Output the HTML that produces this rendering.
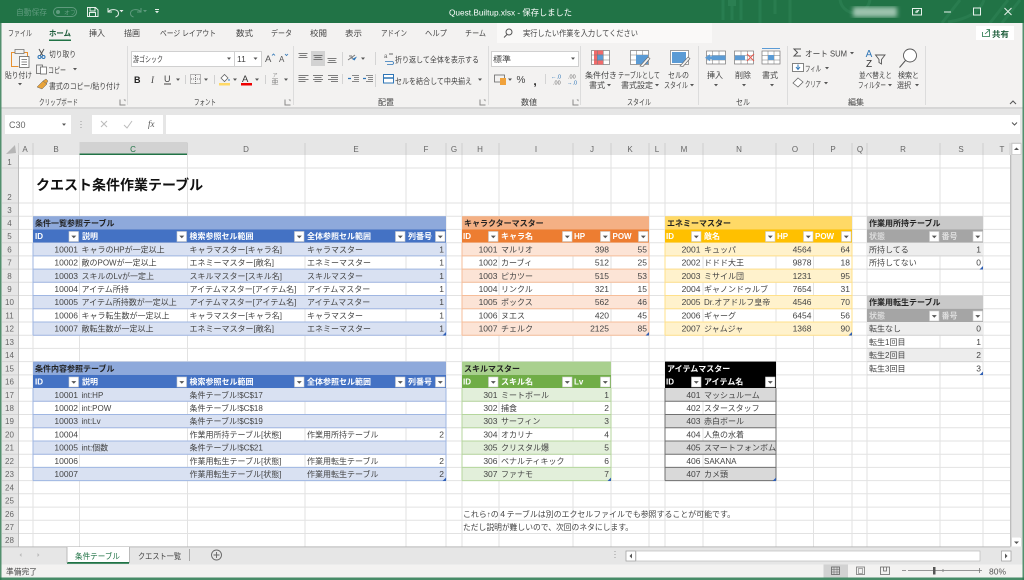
<!DOCTYPE html>
<html lang="ja"><head><meta charset="utf-8"><title>Quest.Builtup.xlsx</title>
<style>
html,body{margin:0;padding:0;background:#e6e6e6;width:1024px;height:580px;overflow:hidden}
svg{display:block;filter:blur(.3px)}
text{font-family:"Liberation Sans","Noto Sans CJK JP",sans-serif;font-size:8px;fill:#444}
.r{text-anchor:end}.m{text-anchor:middle}
.n{font-size:8.5px}
.b{font-weight:700;fill:#222}
.h{font-weight:700;fill:#fff}
.hg{font-weight:700;fill:#ddd}
.g{fill:#666;text-anchor:middle}
.w{fill:#fff}
.a{fill:#555}
.f{font-size:9px}
</style></head><body>
<svg width="1024" height="580" viewBox="0 0 1024 580" xmlns="http://www.w3.org/2000/svg">
<defs>
<g id="f"><rect x=".5" y=".5" width="9.5" height="10" fill="#fff" stroke="#ccc" stroke-width=".6"/><path d="M2.8 4.6h5l-2.5 2.6z" fill="#555"/></g>
<path id="d" d="M-2 -1h4l-2 2.4z" fill="#555"/>
<path id="l" d="M-3 3V-3h1V2h5v1zM1-3h2v2z" fill="#888"/>
<filter id="bl"><feGaussianBlur stdDeviation="2.2"/></filter>
</defs>
<rect width="1024" height="580" fill="#e6e6e6"/>

<!-- title bar -->
<rect width="1024" height="23" fill="#217346"/>
<g fill="none" stroke="#2b7f52" stroke-width="3" opacity=".8"><path d="M723 0V20M732 0V20M741 0V20M760 0V23M775 0V14M790 0V23M1020 0l-18 23M1008 0l-18 23M960 0l-18 23"/><circle cx="855" cy="-2" r="15"/><path d="M948 22c20-3 32-10 36-22"/></g>
<rect x="728" y="-4" width="8" height="10" fill="#2b7f52"/>
<text x="16" y="15" fill="#5f9b7e" style="fill:#5f9b7e" textLength="31" lengthAdjust="spacingAndGlyphs">自動保存</text>
<rect x="53.5" y="7.5" width="23" height="9" rx="4.5" fill="none" stroke="#5f9b7e"/><circle cx="58" cy="12" r="2" fill="#5f9b7e"/><text x="64" y="15" style="fill:#5f9b7e;font-size:6px">オフ</text>
<g fill="none" stroke="#e6f0ea" stroke-width="1"><path d="M87.5 7.5h8l2.500 2.500v6.500h-10.500zM90 7.500v3.500h5v-3.500M89.500 16.500v-4h6v4"/><path d="M108 8v4h4M108.500 11.500c3-3 10-2.500 10 2 0 2-1.500 3-3 3.500"/></g>
<use href="#d" x="121.500" y="11" style="fill:#fff"/><path d="M119.500 10h4l-2 2.300z" fill="#e6f0ea"/>
<path d="M141 8v4h-4M140.500 11.500c-3-3-10-2.500-10 2 0 2 1.500 3 3 3.500" fill="none" stroke="#5f9b7e"/>
<path d="M143 10h4l-2 2.300z" fill="#5f9b7e"/>
<path d="M155 9h4v1h-4zM155 11h4l-2 2.300z" fill="#e6f0ea"/>
<text x="449" y="15.500" class="w" style="fill:#fff;font-size:8.500px" textLength="123" lengthAdjust="spacingAndGlyphs">Quest.Builtup.xlsx  -  保存しました</text>
<rect x="853" y="7" width="44" height="10" fill="#9cc3ae" filter="url(#bl)"/>
<g fill="none" stroke="#e8f2ec"><rect x="912.500" y="8.500" width="9" height="6.500"/><path d="M919 10l-2 2h-2M917 10v3" /><path d="M944 12h7"/><rect x="973.500" y="8" width="7" height="7"/><path d="M1004.500 8l7 7M1011.500 8l-7 7"/></g>

<!-- tabs -->
<rect x="1.500" y="23" width="1021" height="20" fill="#f3f2f1"/>
<g>
<text x="8" y="36" textLength="24" lengthAdjust="spacingAndGlyphs">ファイル</text>
<text x="49" y="36" class="b" style="fill:#1d5c3a" textLength="22" lengthAdjust="spacingAndGlyphs">ホーム</text>
<rect x="49" y="39.500" width="22" height="1.500" fill="#217346"/>
<text x="89" y="36" textLength="16" lengthAdjust="spacingAndGlyphs">挿入</text>
<text x="124" y="36" textLength="16" lengthAdjust="spacingAndGlyphs">描画</text>
<text x="160" y="36" textLength="56" lengthAdjust="spacingAndGlyphs">ページ レイアウト</text>
<text x="236" y="36" textLength="17" lengthAdjust="spacingAndGlyphs">数式</text>
<text x="271" y="36" textLength="21" lengthAdjust="spacingAndGlyphs">データ</text>
<text x="310" y="36" textLength="17" lengthAdjust="spacingAndGlyphs">校閲</text>
<text x="345" y="36" textLength="17" lengthAdjust="spacingAndGlyphs">表示</text>
<text x="381" y="36" textLength="26" lengthAdjust="spacingAndGlyphs">アドイン</text>
<text x="425" y="36" textLength="22" lengthAdjust="spacingAndGlyphs">ヘルプ</text>
<text x="465" y="36" textLength="21" lengthAdjust="spacingAndGlyphs">チーム</text>
</g>
<rect x="497" y="23" width="215" height="20" fill="#faf9f8"/>
<circle cx="509" cy="32" r="3" fill="none" stroke="#555"/><path d="M507 34.500l-3 3" stroke="#555"/>
<text x="523" y="36" textLength="115" lengthAdjust="spacingAndGlyphs">実行したい作業を入力してください</text>
<rect x="976" y="26" width="38" height="14" fill="#fff"/>
<path d="M982.500 32v4.500h7V32M985 34l4.500-4M986.500 29.500h3v3" fill="none" stroke="#217346" stroke-width=".8"/>
<text x="992" y="37" class="b" style="fill:#1d5c3a" textLength="17" lengthAdjust="spacingAndGlyphs">共有</text>

<!-- ribbon -->
<rect x="1.500" y="43" width="1021" height="64" fill="#f3f2f1"/>
<rect x="1.500" y="107" width="1021" height="2" fill="#d6d6d6"/>
<path d="M127.500 46V105M293.500 46V105M488.500 46V105M580.500 46V105M698.500 46V105M787.500 46V105M925.500 46V105" stroke="#dcdcdc"/>
<text x="39" y="105" textLength="39" lengthAdjust="spacingAndGlyphs">クリップボード</text>
<text x="194" y="105" textLength="22" lengthAdjust="spacingAndGlyphs">フォント</text>
<text x="378" y="105" textLength="16" lengthAdjust="spacingAndGlyphs">配置</text>
<text x="521" y="105" textLength="16" lengthAdjust="spacingAndGlyphs">数値</text>
<text x="627" y="105" textLength="24" lengthAdjust="spacingAndGlyphs">スタイル</text>
<text x="736" y="105" textLength="14" lengthAdjust="spacingAndGlyphs">セル</text>
<text x="848" y="105" textLength="16" lengthAdjust="spacingAndGlyphs">編集</text>
<use href="#l" x="122.500" y="102.500"/><use href="#l" x="287.500" y="102.500"/><use href="#l" x="482.500" y="102.500"/><use href="#l" x="575.500" y="102.500"/>
<path d="M1010 104l3-3 3 3" fill="none" stroke="#555"/>

<!-- clipboard -->
<path d="M15 52.500h-3.500v14h7M24 52.500h3.500v4" fill="none" stroke="#e8902e"/><rect x="15" y="49.500" width="9" height="4" fill="#f3f2f1" stroke="#777" stroke-width=".8"/>
<rect x="19.500" y="56.500" width="9.500" height="11" fill="#fff" stroke="#666" stroke-width=".8"/><path d="M21.500 59.500h5.500M21.500 62h5.500M21.500 64.500h5.500" stroke="#666" stroke-width=".7"/>
<text x="5" y="78" textLength="27" lengthAdjust="spacingAndGlyphs">貼り付け</text><use href="#d" x="20" y="84"/>
<path d="M39 49l4 7M44 49l-4 7" stroke="#555" fill="none"/><circle cx="39.500" cy="57" r="1.500" fill="none" stroke="#2e75b6"/><circle cx="43.500" cy="57" r="1.500" fill="none" stroke="#2e75b6"/>
<text x="49" y="57" textLength="27" lengthAdjust="spacingAndGlyphs">切り取り</text>
<rect x="36.500" y="65" width="6" height="8.500" fill="#f3f2f1" stroke="#666" stroke-width=".8"/><rect x="40.500" y="67" width="6" height="7" fill="#fff" stroke="#666" stroke-width=".8"/>
<text x="48" y="73" textLength="18" lengthAdjust="spacingAndGlyphs">コピー</text><use href="#d" x="75" y="69"/>
<path d="M37 87l6-6 4 3-5 5zM43 81l3-2 2 2-2 3" fill="#e8a33a" stroke="#666" stroke-width=".5"/>
<text x="49" y="89" textLength="71" lengthAdjust="spacingAndGlyphs">書式のコピー/貼り付け</text>

<!-- font -->
<rect x="131.500" y="51.500" width="130" height="15" fill="#fff" stroke="#d0d0d0"/><path d="M234.500 51.500v15" stroke="#d0d0d0"/>
<text x="133" y="62" textLength="30" lengthAdjust="spacingAndGlyphs">游ゴシック</text><use href="#d" x="229" y="58.500"/>
<text x="237" y="62" class="n">11</text><use href="#d" x="255.500" y="58.500"/>
<text x="265" y="62" class="a" style="font-size:9.500px">A</text><path d="M272 55.500l1.500-1.500 1.500 1.500" stroke="#2e75b6" fill="none" stroke-width=".8"/>
<text x="279" y="62" class="a" style="font-size:8px">A</text><path d="M285 54l1.500 1.500 1.500-1.500" stroke="#2e75b6" fill="none" stroke-width=".8"/>
<text x="134" y="83" class="b" style="font-size:9px">B</text>
<text x="151" y="83" style="font-size:9px;font-style:italic;font-family:'Liberation Serif',serif">I</text>
<text x="164" y="82" style="font-size:9px">U</text><path d="M164 84h7" stroke="#444"/><use href="#d" x="178" y="79.500"/>
<path d="M185.500 75v9" stroke="#d0d0d0"/>
<rect x="190.500" y="74.500" width="10" height="9" fill="none" stroke="#777" stroke-dasharray="1 1"/><path d="M195.500 75v9M191 79h9" stroke="#777" stroke-dasharray="1 1"/><use href="#d" x="206" y="79.500"/>
<path d="M214.500 75v9" stroke="#d0d0d0"/>
<path d="M221 78l3.500-3.500 3.500 3.500-3.500 3.500z" fill="#fff" stroke="#666" stroke-width=".8"/><path d="M229 79v2" stroke="#2e75b6"/>
<rect x="219" y="83" width="11" height="2.500" fill="#ffd966"/><use href="#d" x="235" y="79.500"/>
<text x="242" y="82" style="font-size:9.500px;fill:#333">A</text><rect x="241" y="83" width="11" height="2.500" fill="#e00"/><use href="#d" x="257" y="79.500"/>
<path d="M265.500 75v9" stroke="#d0d0d0"/>
<text x="275" y="77" class="m" style="font-size:5px;fill:#888">ア</text><text x="275" y="84" class="m" style="font-size:7px;fill:#888">亜</text><use href="#d" x="286" y="79.500"/>

<!-- alignment -->
<rect x="311" y="51" width="14" height="15" fill="#d2d2d2"/>
<path d="M298.500 53.500h9M299.500 55.500h7M298.500 57.500h9M313.500 55.500h9M314.500 57.500h7M313.500 59.500h9M327.500 58.500h9M328.500 60.500h7M327.500 62.500h9" stroke="#555" stroke-width=".8"/>
<path d="M298.500 75.500h10M298.500 77.500h7M298.500 79.500h10M298.500 81.500h7M313 75.500h10M314.500 77.500h7M313 79.500h10M314.500 81.500h7M328 75.500h10M331 77.500h7M328 79.500h10M331 81.500h7" stroke="#555" stroke-width=".8"/>
<path d="M342.500 52v14M342.500 74v10M375.500 52v13M375.500 74v13" stroke="#d4d4d4"/>
<path d="M348 60l7-5M349 56h3M350 58h3" stroke="#777" fill="none"/><path d="M352 59l5-2.500-2.500 4z" fill="#2e75b6"/><use href="#d" x="363" y="58.500"/>
<path d="M352 75.500h7M354 77.500h5M354 79.500h5M352 81.500h7M366 75.500h7M368 77.500h5M368 79.500h5M366 81.500h7" stroke="#666" stroke-width=".8"/>
<path d="M348 78.500h3M363 78.500h3" stroke="#2e75b6" stroke-width="1.300"/>
<text x="384" y="58" style="font-size:6px;fill:#666">a</text><path d="M385 61.500h7c2 0 2 3 0 3h-5" stroke="#2e75b6" fill="none" stroke-width=".8"/><path d="M389 54h4" stroke="#666"/>
<text x="395" y="62.500" textLength="84" lengthAdjust="spacingAndGlyphs">折り返して全体を表示する</text>
<rect x="383.500" y="74.500" width="10" height="8.500" fill="#fff" stroke="#2e75b6"/><path d="M384 78h9" stroke="#2e75b6" stroke-width="1.500"/>
<text x="395" y="84" textLength="77" lengthAdjust="spacingAndGlyphs">セルを結合して中央揃え</text><use href="#d" x="480" y="79.500"/>

<!-- number -->
<rect x="491.500" y="51.500" width="87" height="15" fill="#fff" stroke="#d0d0d0"/>
<text x="493" y="62" textLength="18" lengthAdjust="spacingAndGlyphs">標準</text><use href="#d" x="573" y="58.500"/>
<rect x="494.500" y="75" width="10" height="7" fill="#f3f2f1" stroke="#666" stroke-width=".8"/><rect x="500" y="78" width="6" height="7" fill="#f0a23c"/><use href="#d" x="510" y="79.500"/>
<text x="521" y="83" class="m f" style="font-size:10px">%</text><text x="535" y="85" class="m b" style="font-size:12px">,</text>
<path d="M545.500 74v10" stroke="#d4d4d4"/>
<text x="551" y="78.500" style="font-size:5.500px;fill:#2e75b6">←.0</text><text x="553" y="84.500" style="font-size:5.500px;fill:#666">.00</text>
<text x="568" y="78.500" style="font-size:5.500px;fill:#666">.00</text><text x="567" y="84.500" style="font-size:5.500px;fill:#2e75b6">→.0</text>

<!-- style -->
<g fill="#fff" stroke="#777" stroke-width=".7">
<rect x="591.500" y="50.500" width="18" height="14"/><rect x="630.500" y="50.500" width="18" height="14"/><rect x="670.500" y="50.500" width="18" height="14"/></g>
<path d="M594 50.500h9v4h-6v6h6v4h-9z" fill="#f06a6a"/><rect x="597" y="54.500" width="6" height="6" fill="#5b9bd5"/>
<path d="M597.500 50.500v14M603.500 50.500v14M591.500 55h18M591.500 60h18M636.500 50.500v14M642.500 50.500v14M630.500 55h18M630.500 60h18" stroke="#777" stroke-width=".5"/>
<rect x="636" y="55" width="12" height="9" fill="#5b9bd5"/><path d="M640 66l8-9 2 1.500-7 8z" fill="#f3f2f1" stroke="#666" stroke-width=".6"/>
<rect x="672" y="52" width="14" height="11" fill="#5b9bd5"/><path d="M680 66l8-9 2 1.500-7 8z" fill="#f3f2f1" stroke="#666" stroke-width=".6"/>
<text x="585" y="78" textLength="32" lengthAdjust="spacingAndGlyphs">条件付き</text>
<text x="589" y="88" textLength="16" lengthAdjust="spacingAndGlyphs">書式</text><use href="#d" x="609" y="85"/>
<text x="618" y="78" textLength="42" lengthAdjust="spacingAndGlyphs">テーブルとして</text>
<text x="621" y="88" textLength="32" lengthAdjust="spacingAndGlyphs">書式設定</text><use href="#d" x="657" y="85"/>
<text x="668" y="78" textLength="21" lengthAdjust="spacingAndGlyphs">セルの</text>
<text x="664" y="88" textLength="24" lengthAdjust="spacingAndGlyphs">スタイル</text><use href="#d" x="692" y="85"/>

<!-- cells -->
<g fill="#fff" stroke="#777" stroke-width=".7"><rect x="706.500" y="51" width="19" height="13"/><rect x="734.500" y="51" width="19" height="13"/><rect x="762" y="51" width="18" height="13"/></g>
<path d="M712.500 51v13M719 51v13M706.500 55.500h19M706.500 60h19M741 51v13M747.500 51v13M734.500 55.500h19M734.500 60h19M768 51v13M774 51v13M762 55.500h18M762 60h18" stroke="#777" stroke-width=".5"/>
<rect x="712" y="55.500" width="13.500" height="4.500" fill="#5b9bd5"/><path d="M705 57.700l5-3.500v2h4v3h-4v2z" fill="#5b9bd5"/>
<rect x="735" y="55.500" width="10" height="4.500" fill="#5b9bd5"/><path d="M747 54l7 7M754 54l-7 7" stroke="#e85a4f"/>
<rect x="768" y="55" width="6" height="5" fill="#5b9bd5"/><path d="M762 48.500h18" stroke="#5b9bd5"/>
<text x="707" y="78" textLength="16" lengthAdjust="spacingAndGlyphs">挿入</text><use href="#d" x="716" y="85"/>
<text x="735" y="78" textLength="16" lengthAdjust="spacingAndGlyphs">削除</text><use href="#d" x="744" y="85"/>
<text x="762" y="78" textLength="16" lengthAdjust="spacingAndGlyphs">書式</text><use href="#d" x="772" y="85"/>

<!-- edit -->
<path d="M801 49h-7l3.500 3.500-3.500 3.500h7" fill="none" stroke="#555"/>
<text x="805" y="56.500" textLength="42" lengthAdjust="spacingAndGlyphs">オート SUM</text><use href="#d" x="852" y="53"/>
<rect x="792.500" y="63.500" width="11" height="8" fill="#fff" stroke="#666" stroke-width=".8"/><path d="M798 64.500v4M796 67l2 2.500 2-2.500" stroke="#2e75b6" fill="none"/>
<text x="805" y="71.500" textLength="16" lengthAdjust="spacingAndGlyphs">フィル</text><use href="#d" x="827" y="68"/>
<path d="M793 83l5-5 5 4-5 5z" fill="#fff" stroke="#666" stroke-width=".8"/>
<text x="805" y="87" textLength="16" lengthAdjust="spacingAndGlyphs">クリア</text><use href="#d" x="826" y="83"/>
<text x="869" y="57" class="m" style="font-size:10px;fill:#2e75b6">A</text><text x="869" y="67" class="m" style="font-size:10px;fill:#333">Z</text>
<path d="M875.500 55h9.500l-3.500 4.500v4.500l-2.500-1.500v-3z" fill="none" stroke="#555" stroke-width=".9"/>
<text x="859" y="78" textLength="33" lengthAdjust="spacingAndGlyphs">並べ替えと</text>
<text x="858" y="88" textLength="28" lengthAdjust="spacingAndGlyphs">フィルター</text><use href="#d" x="890" y="85"/>
<circle cx="910" cy="55.500" r="6.500" fill="#fff" stroke="#555" stroke-width=".9"/><path d="M905.500 60.500l-6 7" stroke="#555"/>
<text x="898" y="78" textLength="21" lengthAdjust="spacingAndGlyphs">検索と</text>
<text x="897" y="88" textLength="14" lengthAdjust="spacingAndGlyphs">選択</text><use href="#d" x="917" y="85"/>

<!-- formula bar -->
<rect x="5" y="115" width="66" height="19" fill="#fff"/><text x="9" y="128" class="n" style="font-size:9px;fill:#666">C30</text><use href="#d" x="64" y="124.500"/>
<path d="M81 121v1M81 124v1M81 127v1" stroke="#999"/>
<rect x="92" y="115" width="71" height="19" fill="#fff"/>
<path d="M101 121l6 6M107 121l-6 6" stroke="#bbb"/><path d="M124 125l3 3 5-7" stroke="#bbb" fill="none"/>
<text x="148" y="127" style="font-family:'Liberation Serif',serif;font-style:italic;font-size:9px;fill:#555">fx</text>
<rect x="166" y="115" width="854" height="19" fill="#fff"/><path d="M1012 122.500l2.500 2.500 2.500-2.500" fill="none" stroke="#555"/>

<!-- sheet base -->
<rect x="18" y="155" width="992" height="392" fill="#fff"/>
<rect x="1.500" y="142" width="1008.500" height="13" fill="#e6e6e6"/>
<rect x="79.500" y="142" width="108" height="13" fill="#d2d2d2"/><rect x="79.500" y="153.500" width="108" height="1.500" fill="#217346"/>
<path d="M16 153l-1-8-9 9z" fill="#b5b5b5"/>
<path d="M18.500 143V155M33 143V155M187.500 143V155M305 143V155M406 143V155M446 143V155M462 143V155M499 143V155M573 143V155M611 143V155M649 143V155M665 143V155M703 143V155M776 143V155M813.500 143V155M852 143V155M867 143V155M940 143V155M983 143V155M1010 143V155" stroke="#cfcfcf"/>
<path d="M18 168H1010M18 203H1010M18 216.200H1010M18 229.400H1010M18 242.700H1010M18 255.900H1010M18 269.100H1010M18 282.300H1010M18 295.500H1010M18 308.800H1010M18 322H1010M18 335.200H1010M18 348.400H1010M18 361.600H1010M18 374.900H1010M18 388.100H1010M18 401.300H1010M18 414.500H1010M18 427.700H1010M18 441H1010M18 454.200H1010M18 467.400H1010M18 480.600H1010M18 493.800H1010M18 507.100H1010M18 520.300H1010M18 533.500H1010" stroke="#e2e2e2"/>
<path d="M33 155V547M79.500 155V547M187.500 155V547M305 155V547M406 155V547M446 155V547M462 155V547M499 155V547M573 155V547M611 155V547M649 155V547M665 155V547M703 155V547M776 155V547M813.500 155V547M852 155V547M867 155V547M940 155V547M983 155V547" stroke="#e2e2e2"/>
<path d="M2 168H18M2 203H18M2 216.200H18M2 229.400H18M2 242.700H18M2 255.900H18M2 269.100H18M2 282.300H18M2 295.500H18M2 308.800H18M2 322H18M2 335.200H18M2 348.400H18M2 361.600H18M2 374.900H18M2 388.100H18M2 401.300H18M2 414.500H18M2 427.700H18M2 441H18M2 454.200H18M2 467.400H18M2 480.600H18M2 493.800H18M2 507.100H18M2 520.300H18M2 533.500H18" stroke="#d2d2d2"/>
<path d="M18.500 155V547" stroke="#bdbdbd"/>
<rect x="1010" y="155" width="1" height="392" fill="#bdbdbd"/>
<!-- col headers -->
<g class="hdr">
<text x="25" y="152" class="g">A</text><text x="56" y="152" class="g">B</text><text x="133" y="152" class="g" style="fill:#217346">C</text><text x="246" y="152" class="g">D</text><text x="356" y="152" class="g">E</text><text x="426" y="152" class="g">F</text><text x="454" y="152" class="g">G</text><text x="480" y="152" class="g">H</text><text x="536" y="152" class="g">I</text><text x="592" y="152" class="g">J</text><text x="630" y="152" class="g">K</text><text x="657" y="152" class="g">L</text><text x="684" y="152" class="g">M</text><text x="739" y="152" class="g">N</text><text x="795" y="152" class="g">O</text><text x="833" y="152" class="g">P</text><text x="860" y="152" class="g">Q</text><text x="903" y="152" class="g">R</text><text x="961" y="152" class="g">S</text><text x="1002" y="152" class="g">T</text>
</g>
<!-- row headers -->
<text x="9.500" y="165" class="g">1</text><text x="9.500" y="200" class="g">2</text><text x="9.500" y="213" class="g">3</text><text x="9.500" y="226" class="g">4</text><text x="9.500" y="239.200" class="g">5</text><text x="9.500" y="252.400" class="g">6</text><text x="9.500" y="265.600" class="g">7</text><text x="9.500" y="278.800" class="g">8</text><text x="9.500" y="292" class="g">9</text><text x="9.500" y="305.200" class="g">10</text><text x="9.500" y="318.500" class="g">11</text><text x="9.500" y="331.700" class="g">12</text><text x="9.500" y="345" class="g">13</text><text x="9.500" y="358.100" class="g">14</text><text x="9.500" y="371.300" class="g">15</text><text x="9.500" y="384.600" class="g">16</text><text x="9.500" y="397.800" class="g">17</text><text x="9.500" y="411" class="g">18</text><text x="9.500" y="424.200" class="g">19</text><text x="9.500" y="437.400" class="g">20</text><text x="9.500" y="450.700" class="g">21</text><text x="9.500" y="463.900" class="g">22</text><text x="9.500" y="477.100" class="g">23</text><text x="9.500" y="490.300" class="g">24</text><text x="9.500" y="503.500" class="g">25</text><text x="9.500" y="516.800" class="g">26</text><text x="9.500" y="530" class="g">27</text><text x="9.500" y="543.200" class="g">28</text>

<text x="36" y="190" style="font-size:14px;font-weight:700;fill:#111">クエスト条件作業テーブル</text>

<!-- table fills -->
<!-- T1 -->
<rect x="33" y="216.200" width="413" height="13.200" fill="#8ea9db"/><rect x="33" y="229.400" width="413" height="13.300" fill="#4472c4"/>
<g fill="#d9e1f2"><rect x="33" y="242.700" width="413" height="13.200"/><rect x="33" y="269.100" width="413" height="13.200"/><rect x="33" y="295.500" width="413" height="13.300"/><rect x="33" y="322" width="413" height="13.200"/></g>
<path d="M33 255.900H446M33 269.100H446M33 282.300H446M33 295.500H446M33 308.800H446M33 322H446M33 335.200H446M33 242.700V335.200M446 242.700V335.200" stroke="#9fb6e2" fill="none"/>
<!-- T2 -->
<rect x="33" y="361.600" width="413" height="13.300" fill="#8ea9db"/><rect x="33" y="374.900" width="413" height="13.200" fill="#4472c4"/>
<g fill="#d9e1f2"><rect x="33" y="388.100" width="413" height="13.200"/><rect x="33" y="414.500" width="413" height="13.200"/><rect x="33" y="441" width="413" height="13.200"/><rect x="33" y="467.400" width="413" height="13.200"/></g>
<path d="M33 401.300H446M33 414.500H446M33 427.700H446M33 441H446M33 454.200H446M33 467.400H446M33 480.600H446M33 388.100V480.600M446 388.100V480.600" stroke="#9fb6e2" fill="none"/>
<!-- Orange -->
<rect x="462" y="216.200" width="187" height="13.200" fill="#f4b084"/><rect x="462" y="229.400" width="187" height="13.300" fill="#ed7d31"/>
<g fill="#fce4d6"><rect x="462" y="242.700" width="187" height="13.200"/><rect x="462" y="269.100" width="187" height="13.200"/><rect x="462" y="295.500" width="187" height="13.300"/><rect x="462" y="322" width="187" height="13.200"/></g>
<path d="M462 255.900H649M462 269.100H649M462 282.300H649M462 295.500H649M462 308.800H649M462 322H649M462 335.200H649M462 242.700V335.200M649 242.700V335.200" stroke="#f6bd99" fill="none"/>
<!-- Yellow -->
<rect x="665" y="216.200" width="187" height="13.200" fill="#ffd966"/><rect x="665" y="229.400" width="187" height="13.300" fill="#ffc000"/>
<g fill="#fff2cc"><rect x="665" y="242.700" width="187" height="13.200"/><rect x="665" y="269.100" width="187" height="13.200"/><rect x="665" y="295.500" width="187" height="13.300"/><rect x="665" y="322" width="187" height="13.200"/></g>
<path d="M665 255.900H852M665 269.100H852M665 282.300H852M665 295.500H852M665 308.800H852M665 322H852M665 335.200H852M665 242.700V335.200M852 242.700V335.200" stroke="#ffe08a" fill="none"/>
<!-- Gray 1 -->
<rect x="867" y="216.200" width="116" height="13.200" fill="#c9c9c9"/><rect x="867" y="229.400" width="116" height="13.300" fill="#a5a5a5"/>
<rect x="867" y="242.700" width="116" height="13.200" fill="#ededed"/>
<path d="M867 255.900H983M867 269.100H983" stroke="#d4d4d4"/>
<!-- Gray 2 -->
<rect x="867" y="295.500" width="116" height="13.300" fill="#c9c9c9"/><rect x="867" y="308.800" width="116" height="13.200" fill="#a5a5a5"/>
<rect x="867" y="322" width="116" height="13.200" fill="#ededed"/><rect x="867" y="348.400" width="116" height="13.200" fill="#ededed"/>
<path d="M867 335.200H983M867 348.400H983M867 361.600H983M867 374.900H983" stroke="#d4d4d4"/>
<!-- Green -->
<rect x="462" y="361.600" width="149" height="13.300" fill="#a9d08e"/><rect x="462" y="374.900" width="149" height="13.200" fill="#70ad47"/>
<g fill="#e2efda"><rect x="462" y="388.100" width="149" height="13.200"/><rect x="462" y="414.500" width="149" height="13.200"/><rect x="462" y="441" width="149" height="13.200"/><rect x="462" y="467.400" width="149" height="13.200"/></g>
<path d="M462 401.300H611M462 414.500H611M462 427.700H611M462 441H611M462 454.200H611M462 467.400H611M462 480.600H611M462 388.100V480.600M611 388.100V480.600" stroke="#b5d69d" fill="none"/>
<!-- Black -->
<rect x="665" y="361.600" width="111" height="26.500" fill="#000"/>
<g fill="#d9d9d9"><rect x="665" y="388.100" width="111" height="13.200"/><rect x="665" y="414.500" width="111" height="13.200"/><rect x="665" y="441" width="111" height="13.200"/><rect x="665" y="467.400" width="111" height="13.200"/></g>
<path d="M665 401.300H776M665 414.500H776M665 427.700H776M665 441H776M665 454.200H776M665 467.400H776M665 480.600H776M665 388.100V480.600M776 388.100V480.600" stroke="#707070" fill="none"/>

<!-- filter buttons -->
<use href="#f" x="68.500" y="231"/><use href="#f" x="176.500" y="231"/><use href="#f" x="294" y="231"/><use href="#f" x="395" y="231"/><use href="#f" x="435" y="231"/>
<use href="#f" x="68.500" y="376.500"/><use href="#f" x="176.500" y="376.500"/><use href="#f" x="294" y="376.500"/><use href="#f" x="395" y="376.500"/><use href="#f" x="435" y="376.500"/>
<use href="#f" x="488" y="231"/><use href="#f" x="562" y="231"/><use href="#f" x="600" y="231"/><use href="#f" x="638" y="231"/>
<use href="#f" x="691" y="231"/><use href="#f" x="765" y="231"/><use href="#f" x="803" y="231"/><use href="#f" x="841" y="231"/>
<use href="#f" x="929" y="231"/><use href="#f" x="972.500" y="231"/><use href="#f" x="929" y="310.500"/><use href="#f" x="972.500" y="310.500"/>
<use href="#f" x="488" y="376.500"/><use href="#f" x="562" y="376.500"/><use href="#f" x="600" y="376.500"/>
<use href="#f" x="691" y="376.500"/><use href="#f" x="765" y="376.500"/>
<!-- resize handles -->
<g fill="#2f5fb5"><path d="M446 332v3.500h-3.500zM446 477.500v3.500h-3.500zM649 332v3.500h-3.500zM852 332v3.500h-3.500zM983 266v3.500h-3.500zM983 371.500v3.500h-3.500zM611 477.500v3.500h-3.500zM776 477.500v3.500h-3.500z"/></g>

<!-- T1 text -->
<text x="35" y="226" class="b">条件一覧参照テーブル</text>
<text x="35" y="239.200" class="h">ID</text><text x="82" y="239.200" class="h">説明</text><text x="189.500" y="239.200" class="h">検索参照セル範囲</text><text x="307" y="239.200" class="h">全体参照セル範囲</text><text x="408" y="239.200" class="h">列番号</text>
<text x="78" y="252.400" class="r n">10001</text><text x="81.500" y="252.400">キャラのHPが一定以上</text><text x="189.500" y="252.400">キャラマスター[キャラ名]</text><text x="307" y="252.400">キャラマスター</text><text x="444" y="252.400" class="r n">1</text>
<text x="78" y="265.600" class="r n">10002</text><text x="81.500" y="265.600">敵のPOWが一定以上</text><text x="189.500" y="265.600">エネミーマスター[敵名]</text><text x="307" y="265.600">エネミーマスター</text><text x="444" y="265.600" class="r n">1</text>
<text x="78" y="278.800" class="r n">10003</text><text x="81.500" y="278.800">スキルのLvが一定上</text><text x="189.500" y="278.800">スキルマスター[スキル名]</text><text x="307" y="278.800">スキルマスター</text><text x="444" y="278.800" class="r n">1</text>
<text x="78" y="292" class="r n">10004</text><text x="81.500" y="292">アイテム所持</text><text x="189.500" y="292">アイテムマスター[アイテム名]</text><text x="307" y="292">アイテムマスター</text><text x="444" y="292" class="r n">1</text>
<text x="78" y="305.200" class="r n">10005</text><text x="81.500" y="305.200">アイテム所持数が一定以上</text><text x="189.500" y="305.200">アイテムマスター[アイテム名]</text><text x="307" y="305.200">アイテムマスター</text><text x="444" y="305.200" class="r n">1</text>
<text x="78" y="318.500" class="r n">10006</text><text x="81.500" y="318.500">キャラ転生数が一定以上</text><text x="189.500" y="318.500">キャラマスター[キャラ名]</text><text x="307" y="318.500">キャラマスター</text><text x="444" y="318.500" class="r n">1</text>
<text x="78" y="331.700" class="r n">10007</text><text x="81.500" y="331.700">敵転生数が一定以上</text><text x="189.500" y="331.700">エネミーマスター[敵名]</text><text x="307" y="331.700">エネミーマスター</text><text x="444" y="331.700" class="r n">1</text>

<!-- T2 text -->
<text x="35" y="371.300" class="b">条件内容参照テーブル</text>
<text x="35" y="384.600" class="h">ID</text><text x="82" y="384.600" class="h">説明</text><text x="189.500" y="384.600" class="h">検索参照セル範囲</text><text x="307" y="384.600" class="h">全体参照セル範囲</text><text x="408" y="384.600" class="h">列番号</text>
<text x="78" y="397.800" class="r n">10001</text><text x="81.500" y="397.800">int:HP</text><text x="189.500" y="397.800">条件テーブル!$C$17</text>
<text x="78" y="411" class="r n">10002</text><text x="81.500" y="411">int:POW</text><text x="189.500" y="411">条件テーブル!$C$18</text>
<text x="78" y="424.200" class="r n">10003</text><text x="81.500" y="424.200">int:Lv</text><text x="189.500" y="424.200">条件テーブル!$C$19</text>
<text x="78" y="437.400" class="r n">10004</text><text x="189.500" y="437.400">作業用所持テーブル[状態]</text><text x="307" y="437.400">作業用所持テーブル</text><text x="444" y="437.400" class="r n">2</text>
<text x="78" y="450.700" class="r n">10005</text><text x="81.500" y="450.700">int:個数</text><text x="189.500" y="450.700">条件テーブル!$C$21</text>
<text x="78" y="463.900" class="r n">10006</text><text x="189.500" y="463.900">作業用転生テーブル[状態]</text><text x="307" y="463.900">作業用転生テーブル</text><text x="444" y="463.900" class="r n">2</text>
<text x="78" y="477.100" class="r n">10007</text><text x="189.500" y="477.100">作業用転生テーブル[状態]</text><text x="307" y="477.100">作業用転生テーブル</text><text x="444" y="477.100" class="r n">2</text>

<!-- Orange text -->
<text x="464" y="226" class="b">キャラクターマスター</text>
<text x="463" y="239.200" class="h">ID</text><text x="501" y="239.200" class="h">キャラ名</text><text x="574" y="239.200" class="h">HP</text><text x="612.500" y="239.200" class="h">POW</text>
<text x="497.500" y="252.400" class="r n">1001</text><text x="501" y="252.400">マルリオ</text><text x="609" y="252.400" class="r n">398</text><text x="647" y="252.400" class="r n">55</text>
<text x="497.500" y="265.600" class="r n">1002</text><text x="501" y="265.600">カーブィ</text><text x="609" y="265.600" class="r n">512</text><text x="647" y="265.600" class="r n">25</text>
<text x="497.500" y="278.800" class="r n">1003</text><text x="501" y="278.800">ピカツー</text><text x="609" y="278.800" class="r n">515</text><text x="647" y="278.800" class="r n">53</text>
<text x="497.500" y="292" class="r n">1004</text><text x="501" y="292">リンクル</text><text x="609" y="292" class="r n">321</text><text x="647" y="292" class="r n">15</text>
<text x="497.500" y="305.200" class="r n">1005</text><text x="501" y="305.200">ポックス</text><text x="609" y="305.200" class="r n">562</text><text x="647" y="305.200" class="r n">46</text>
<text x="497.500" y="318.500" class="r n">1006</text><text x="501" y="318.500">ヌエス</text><text x="609" y="318.500" class="r n">420</text><text x="647" y="318.500" class="r n">45</text>
<text x="497.500" y="331.700" class="r n">1007</text><text x="501" y="331.700">チェルク</text><text x="609" y="331.700" class="r n">2125</text><text x="647" y="331.700" class="r n">85</text>

<!-- Yellow text -->
<text x="667" y="226" class="b">エネミーマスター</text>
<text x="666" y="239.200" class="h">ID</text><text x="704" y="239.200" class="h">敵名</text><text x="777" y="239.200" class="h">HP</text><text x="815" y="239.200" class="h">POW</text>
<text x="700.500" y="252.400" class="r n">2001</text><text x="704" y="252.400">キュッパ</text><text x="811.500" y="252.400" class="r n">4564</text><text x="850" y="252.400" class="r n">64</text>
<text x="700.500" y="265.600" class="r n">2002</text><text x="704" y="265.600">ドドド大王</text><text x="811.500" y="265.600" class="r n">9878</text><text x="850" y="265.600" class="r n">18</text>
<text x="700.500" y="278.800" class="r n">2003</text><text x="704" y="278.800">ミサイル団</text><text x="811.500" y="278.800" class="r n">1231</text><text x="850" y="278.800" class="r n">95</text>
<text x="700.500" y="292" class="r n">2004</text><text x="704" y="292">ギャノンドゥルブ</text><text x="811.500" y="292" class="r n">7654</text><text x="850" y="292" class="r n">31</text>
<text x="700.500" y="305.200" class="r n">2005</text><text x="704" y="305.200">Dr.オアドルフ皇帝</text><text x="811.500" y="305.200" class="r n">4546</text><text x="850" y="305.200" class="r n">70</text>
<text x="700.500" y="318.500" class="r n">2006</text><text x="704" y="318.500">ギャーグ</text><text x="811.500" y="318.500" class="r n">6454</text><text x="850" y="318.500" class="r n">56</text>
<text x="700.500" y="331.700" class="r n">2007</text><text x="704" y="331.700">ジャムジャ</text><text x="811.500" y="331.700" class="r n">1368</text><text x="850" y="331.700" class="r n">90</text>

<!-- Gray text -->
<text x="869" y="226" class="b">作業用所持テーブル</text>
<text x="869" y="239.200" class="hg">状態</text><text x="941.500" y="239.200" class="hg">番号</text>
<text x="869" y="252.400">所持してる</text><text x="981" y="252.400" class="r n">1</text>
<text x="869" y="265.600">所持してない</text><text x="981" y="265.600" class="r n">0</text>
<text x="869" y="305.200" class="b">作業用転生テーブル</text>
<text x="869" y="318.500" class="hg">状態</text><text x="941.500" y="318.500" class="hg">番号</text>
<text x="869" y="331.700">転生なし</text><text x="981" y="331.700" class="r n">0</text>
<text x="869" y="345">転生1回目</text><text x="981" y="345" class="r n">1</text>
<text x="869" y="358.100">転生2回目</text><text x="981" y="358.100" class="r n">2</text>
<text x="869" y="371.300">転生3回目</text><text x="981" y="371.300" class="r n">3</text>

<!-- Green text -->
<text x="464" y="371.300" class="b">スキルマスター</text>
<text x="463" y="384.600" class="h">ID</text><text x="501" y="384.600" class="h">スキル名</text><text x="574" y="384.600" class="h">Lv</text>
<text x="497.500" y="397.800" class="r n">301</text><text x="501" y="397.800">ミートボール</text><text x="609" y="397.800" class="r n">1</text>
<text x="497.500" y="411" class="r n">302</text><text x="501" y="411">捕食</text><text x="609" y="411" class="r n">2</text>
<text x="497.500" y="424.200" class="r n">303</text><text x="501" y="424.200">サーフィン</text><text x="609" y="424.200" class="r n">3</text>
<text x="497.500" y="437.400" class="r n">304</text><text x="501" y="437.400">オカリナ</text><text x="609" y="437.400" class="r n">4</text>
<text x="497.500" y="450.700" class="r n">305</text><text x="501" y="450.700">クリスタル爆</text><text x="609" y="450.700" class="r n">5</text>
<text x="497.500" y="463.900" class="r n">306</text><text x="501" y="463.900">ペナルティキック</text><text x="609" y="463.900" class="r n">6</text>
<text x="497.500" y="477.100" class="r n">307</text><text x="501" y="477.100">ファナモ</text><text x="609" y="477.100" class="r n">7</text>

<!-- Black text -->
<text x="667" y="371.300" class="h">アイテムマスター</text>
<text x="666" y="384.600" class="h">ID</text><text x="704" y="384.600" class="h">アイテム名</text>
<text x="700.500" y="397.800" class="r n">401</text><text x="704" y="397.800">マッシュルーム</text>
<text x="700.500" y="411" class="r n">402</text><text x="704" y="411">スタースタッフ</text>
<text x="700.500" y="424.200" class="r n">403</text><text x="704" y="424.200">赤白ボール</text>
<text x="700.500" y="437.400" class="r n">404</text><text x="704" y="437.400">人魚の水着</text>
<text x="700.500" y="450.700" class="r n">405</text><text x="704" y="450.700" textLength="72" lengthAdjust="spacingAndGlyphs">スマートフォンボム</text>
<text x="700.500" y="463.900" class="r n">406</text><text x="704" y="463.900">SAKANA</text>
<text x="700.500" y="477.100" class="r n">407</text><text x="704" y="477.100">カメ頭</text>

<text x="463" y="516.800" textLength="272" lengthAdjust="spacingAndGlyphs">これら↑の４テーブルは別のエクセルファイルでも参照することが可能です。</text>
<text x="463" y="530" textLength="170" lengthAdjust="spacingAndGlyphs">ただし説明が難しいので、次回のネタにします。</text>

<!-- vertical scrollbar -->
<rect x="1011.500" y="143" width="9.500" height="404" fill="#f0f0f0" stroke="#c8c8c8" stroke-width=".6"/>
<rect x="1012" y="143.500" width="9" height="11" fill="#fff" stroke="#bbb" stroke-width=".6"/><path d="M1014 150l2.500-2.500 2.500 2.500z" fill="#555"/>
<rect x="1012" y="155" width="9" height="382" fill="#e3e3e3"/>
<rect x="1012" y="538" width="9" height="9" fill="#fff"/><path d="M1014 541.500l2.500 2.500 2.500-2.500z" fill="#555"/>

<!-- sheet tabs -->
<rect x="1.500" y="546.500" width="1021" height="18" fill="#e6e6e6"/>
<rect x="1.500" y="546.500" width="1009" height=".8" fill="#aaa"/>
<rect x="67" y="547" width="62" height="17" fill="#fff"/><rect x="67" y="562" width="62" height="1.800" fill="#217346"/>
<path d="M67 547v16M129.500 547v16" stroke="#bbb"/>
<text x="75" y="559" style="fill:#217346" textLength="45" lengthAdjust="spacingAndGlyphs">条件テーブル</text>
<text x="138" y="559" textLength="43" lengthAdjust="spacingAndGlyphs">クエスト一覧</text>
<path d="M189.500 549v12" stroke="#a8a8a8"/>
<circle cx="216.500" cy="555" r="5" fill="none" stroke="#666" stroke-width=".9"/><path d="M213.500 555h6M216.500 552v6" stroke="#666" stroke-width=".9"/>
<path d="M21.500 553l-2 2 2 2zM37.500 553l2 2-2 2z" fill="#bbb"/>
<path d="M615 551v1M615 554v1M615 557v1" stroke="#999"/>
<rect x="626" y="551" width="9.500" height="10" fill="#fff" stroke="#999" stroke-width=".7"/><path d="M632 553.500l-2.500 2.500 2.500 2.500z" fill="#555"/>
<rect x="636" y="551" width="344" height="10" fill="#fff" stroke="#bbb" stroke-width=".7"/>
<rect x="1001.500" y="551" width="9.500" height="10" fill="#fff" stroke="#999" stroke-width=".7"/><path d="M1005 553.500l2.500 2.500-2.500 2.500z" fill="#555"/>

<!-- status bar -->
<rect x="1.500" y="564.500" width="1021" height="13" fill="#f3f2f1"/>
<text x="6" y="574.500" textLength="31" lengthAdjust="spacingAndGlyphs">準備完了</text>
<rect x="823.500" y="564.500" width="24.500" height="13" fill="#d2d2d2"/>
<rect x="831.500" y="567" width="8" height="7.500" fill="none" stroke="#666" stroke-width=".8"/><path d="M834 567v7.500M837 567v7.500M831.500 569.500h8M831.500 572h8" stroke="#666" stroke-width=".5"/>
<rect x="856.500" y="567" width="8" height="7.500" fill="none" stroke="#777" stroke-width=".8"/><rect x="858.500" y="568.500" width="4" height="5" fill="none" stroke="#777" stroke-width=".6"/>
<path d="M880.500 567h9v7.500h-9zM883.500 567v4h3v-4" fill="none" stroke="#666" stroke-width=".8"/>
<path d="M902 570.500h4M908 570.500h69M977 570.500h5M979.500 568v5" stroke="#777" stroke-width=".8"/>
<rect x="933" y="567" width="2.500" height="7.500" fill="#555"/><path d="M943 569v3" stroke="#888"/>
<text x="989" y="574.500" class="n" style="fill:#555">80%</text>

<!-- window edges -->
<rect x="0" y="23" width="1.500" height="557" fill="#217346" opacity=".75"/>
<rect x="1022.500" y="23" width="1.500" height="557" fill="#217346" opacity=".75"/>
<rect x="0" y="577.500" width="1024" height="2.500" fill="#2a7a50" opacity=".85"/>
</svg>
</body></html>
